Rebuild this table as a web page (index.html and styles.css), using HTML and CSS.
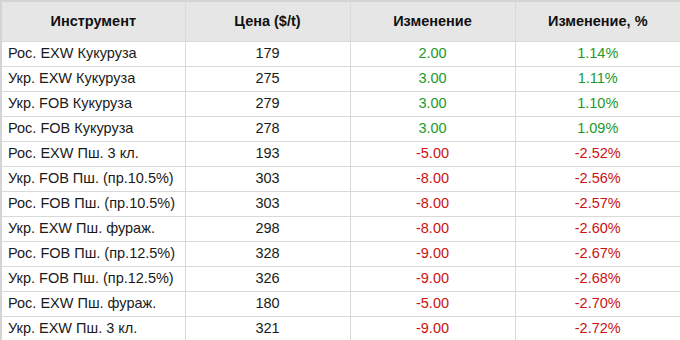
FILE: index.html
```html
<!DOCTYPE html>
<html lang="ru">
<head>
<meta charset="utf-8">
<link rel="stylesheet" href="styles.css">
</head>
<body>
<table class="grid">
  <colgroup>
    <col class="c1"><col class="c2"><col class="c3"><col class="c4">
  </colgroup>
  <thead>
    <tr><th>Инструмент</th><th>Цена ($/t)</th><th>Изменение</th><th>Изменение, %</th></tr>
  </thead>
  <tbody>
    <tr><td class="name">Рос. EXW Кукуруза</td><td>179</td><td class="up">2.00</td><td class="up">1.14%</td></tr>
    <tr><td class="name">Укр. EXW Кукуруза</td><td>275</td><td class="up">3.00</td><td class="up">1.11%</td></tr>
    <tr><td class="name">Укр. FOB Кукуруза</td><td>279</td><td class="up">3.00</td><td class="up">1.10%</td></tr>
    <tr><td class="name">Рос. FOB Кукуруза</td><td>278</td><td class="up">3.00</td><td class="up">1.09%</td></tr>
    <tr><td class="name">Рос. EXW Пш. 3 кл.</td><td>193</td><td class="down">-5.00</td><td class="down">-2.52%</td></tr>
    <tr><td class="name">Укр. FOB Пш. (пр.10.5%)</td><td>303</td><td class="down">-8.00</td><td class="down">-2.56%</td></tr>
    <tr><td class="name">Рос. FOB Пш. (пр.10.5%)</td><td>303</td><td class="down">-8.00</td><td class="down">-2.57%</td></tr>
    <tr><td class="name">Укр. EXW Пш. фураж.</td><td>298</td><td class="down">-8.00</td><td class="down">-2.60%</td></tr>
    <tr><td class="name">Рос. FOB Пш. (пр.12.5%)</td><td>328</td><td class="down">-9.00</td><td class="down">-2.67%</td></tr>
    <tr><td class="name">Укр. FOB Пш. (пр.12.5%)</td><td>326</td><td class="down">-9.00</td><td class="down">-2.68%</td></tr>
    <tr><td class="name">Рос. EXW Пш. фураж.</td><td>180</td><td class="down">-5.00</td><td class="down">-2.70%</td></tr>
    <tr><td class="name">Укр. EXW Пш. 3 кл.</td><td>321</td><td class="down">-9.00</td><td class="down">-2.72%</td></tr>
  </tbody>
</table>
</body>
</html>
```
FILE: styles.css
```css
html, body {
  margin: 0;
  padding: 0;
  background: #ffffff;
}
body {
  font-family: "Liberation Sans", Arial, sans-serif;
  font-size: 14.5px;
  color: #1a1a1a;
}
.grid {
  width: 680px;
  border-collapse: collapse;
  table-layout: fixed;
  border: 2px solid #d4d4d4;
}
.c1 { width: 184px; }
.c2 { width: 165px; }
.c3 { width: 165px; }
.c4 { width: 166px; }
.grid th,
.grid td {
  border: 1px solid #d9d9d9;
  padding: 0 6px;
  text-align: center;
  white-space: nowrap;
  line-height: 16px;
}
.grid th {
  height: 37px;
  background: #e6e6e6;
  font-weight: bold;
  color: #111111;
  padding-bottom: 2px;
}
.grid td {
  height: 22px;
  padding-bottom: 2px;
}
.grid td.name {
  text-align: left;
}
.grid td.up { color: #22992a; }
.grid td.down { color: #cc1111; }
```
